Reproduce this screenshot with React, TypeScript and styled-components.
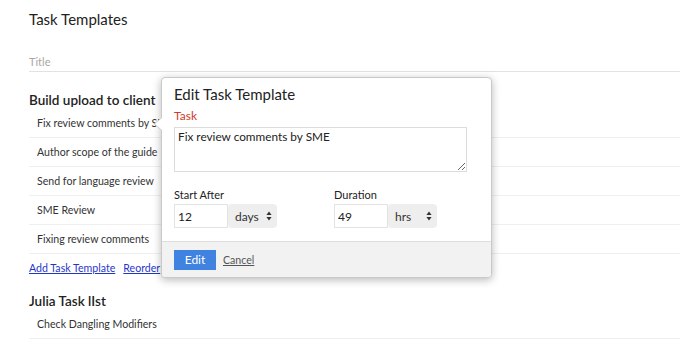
import styled, { createGlobalStyle } from 'styled-components';

const GlobalStyle = createGlobalStyle`
  html, body { margin: 0; padding: 0; background: #fff; }
  body { font-family: Lato, "Liberation Sans", Arial, sans-serif; color: #222; }
  * { box-sizing: border-box; }
`;

const Page = styled.div`
  width: 680px;
  height: 339px;
  overflow: hidden;
  padding: 9px 0 0 29px;
`;

const PageTitle = styled.h1`
  margin: 0;
  font-size: 15px;
  line-height: 20px;
  font-weight: 400;
  color: #222;
`;

const TitleField = styled.input`
  display: block;
  width: 100%;
  height: 21px;
  margin-top: 22px;
  padding: 0;
  border: 0;
  border-bottom: 1px solid #e2e2e2;
  font: inherit;
  font-size: 11px;
  color: #333;
  outline: none;
  &::placeholder { color: #a8a8a8; }
`;

const Group = styled.section<{ $gap: number }>`
  position: relative;
  margin-top: ${p => p.$gap}px;
`;

const GroupTitle = styled.h2`
  margin: 0;
  font-size: 13.5px;
  line-height: 18px;
  font-weight: 600;
  color: #222;
`;

const Row = styled.div`
  height: 29px;
  display: flex;
  align-items: center;
  padding-left: 8px;
  border-bottom: 1px solid #efefef;
  font-size: 10.6px;
  color: #333;
  white-space: nowrap;
`;

const Actions = styled.div`
  display: flex;
  gap: 8px;
  margin-top: 6px;
  line-height: 16px;
  font-size: 10.6px;
`;

const Link = styled.a`
  color: #1f37c9;
  text-decoration: underline;
  cursor: pointer;
`;

const Popover = styled.div`
  position: absolute;
  left: 132px;
  top: -14px;
  width: 331px;
  height: 201px;
  background: #fff;
  border: 1px solid #c9c9c9;
  border-radius: 4px;
  box-shadow: 0 2px 9px rgba(0, 0, 0, 0.28);
  display: flex;
  flex-direction: column;
  z-index: 2;

  &::before, &::after {
    content: '';
    position: absolute;
    top: 39px;
    border-style: solid;
    border-color: transparent;
  }
  &::before {
    left: -8px;
    border-width: 7px 8px 7px 0;
    border-right-color: #c9c9c9;
  }
  &::after {
    left: -7px;
    border-width: 7px 8px 7px 0;
    border-right-color: #fff;
  }
`;

const PopBody = styled.div`
  flex: 1;
  padding: 6px 12px 0;
`;

const PopTitle = styled.h3`
  margin: 0;
  font-size: 15px;
  line-height: 20px;
  font-weight: 400;
  color: #222;
`;

const FieldLabel = styled.label<{ $accent?: boolean }>`
  display: block;
  font-size: 11px;
  line-height: 16px;
  color: ${p => (p.$accent ? '#d33a2a' : '#222')};
`;

const TaskLabel = styled(FieldLabel)`
  margin-top: 4px;
  font-size: 12px;
`;

const TaskArea = styled.textarea`
  display: block;
  width: 293px;
  height: 45px;
  margin-top: 3px;
  padding: 1px 3px;
  border: 1px solid #dcdcdc;
  border-radius: 0;
  font: inherit;
  font-size: 11.8px;
  color: #222;
  resize: vertical;
  outline: none;
`;

const Fields = styled.div`
  display: grid;
  grid-template-columns: 160px 1fr;
  margin-top: 15px;
`;

const Field = styled.div`
  display: flex;
  flex-direction: column;
  gap: 1px;
`;

const Combo = styled.div`
  display: flex;
`;

const NumberBox = styled.input`
  width: 54px;
  height: 24px;
  padding: 0 3px;
  border: 1px solid #e3e3e3;
  font: inherit;
  font-size: 12px;
  color: #222;
  outline: none;
`;

const UnitSelect = styled.div`
  width: 49px;
  height: 24px;
  display: flex;
  align-items: center;
  justify-content: space-between;
  padding: 0 5px 0 7px;
  background: #eeeeee;
  border-radius: 4px;
  font-size: 12px;
  color: #333;
`;

const Footer = styled.div`
  height: 36px;
  display: flex;
  align-items: center;
  gap: 7px;
  padding: 0 12px;
  background: #f2f2f2;
  border-top: 1px solid #dedede;
  border-radius: 0 0 4px 4px;
`;

const PrimaryButton = styled.button`
  width: 42px;
  height: 20px;
  padding: 0;
  border: 0;
  background: #3f82e0;
  color: #fff;
  font: inherit;
  font-size: 12px;
`;

const TextButton = styled.a`
  font-size: 10.6px;
  color: #555;
  text-decoration: underline;
`;

function Arrows() {
  return (
    <svg width="6" height="10" viewBox="0 0 6 10">
      <path d="M3 0.5 L5.6 4 H0.4 Z M3 9.5 L5.6 6 H0.4 Z" fill="#333" />
    </svg>
  );
}

function UnitField({ label, value, unit }: { label: string; value: string; unit: string }) {
  return (
    <Field>
      <FieldLabel>{label}</FieldLabel>
      <Combo>
        <NumberBox defaultValue={value} />
        <UnitSelect>
          <span>{unit}</span>
          <Arrows />
        </UnitSelect>
      </Combo>
    </Field>
  );
}

const buildRows = [
  'Fix review comments by SME',
  'Author scope of the guide',
  'Send for language review',
  'SME Review',
  'Fixing review comments',
];

export default function App() {
  return (
    <>
      <GlobalStyle />
      <Page>
        <PageTitle>Task Templates</PageTitle>
        <TitleField placeholder="Title" />

        <Group $gap={19}>
          <GroupTitle>Build upload to client</GroupTitle>
          {buildRows.map(it => <Row key={it}>{it}</Row>)}
          <Actions>
            <Link>Add Task Template</Link>
            <Link>Reorder</Link>
          </Actions>

          <Popover>
            <PopBody>
              <PopTitle>Edit Task Template</PopTitle>
              <TaskLabel $accent>Task</TaskLabel>
              <TaskArea defaultValue="Fix review comments by SME" />
              <Fields>
                <UnitField label="Start After" value="12" unit="days" />
                <UnitField label="Duration" value="49" unit="hrs" />
              </Fields>
            </PopBody>
            <Footer>
              <PrimaryButton>Edit</PrimaryButton>
              <TextButton>Cancel</TextButton>
            </Footer>
          </Popover>
        </Group>

        <Group $gap={16}>
          <GroupTitle>Julia Task lIst</GroupTitle>
          <Row>Check Dangling Modifiers</Row>
        </Group>
      </Page>
    </>
  );
}
